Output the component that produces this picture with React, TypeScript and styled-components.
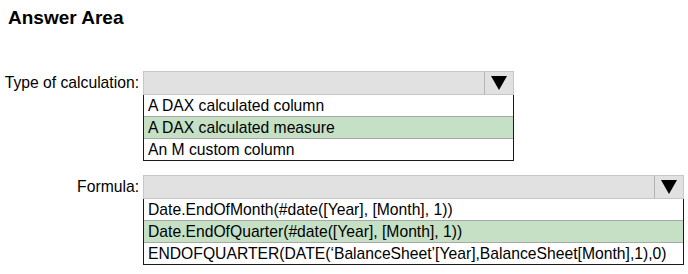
import React from 'react';
import styled, { createGlobalStyle } from 'styled-components';

const Global = createGlobalStyle`
    body {
        margin: 0;
        background: #ffffff;
        font-family: "Liberation Sans", Arial, sans-serif;
        color: #000000;
    }
`;

const S = {
    Page: styled.div`
        width: 688px;
        height: 274px;
        padding: 7px 0 0 7px;
        box-sizing: border-box;
    `,
    Title: styled.h2`
        margin: 0 0 0 1px;
        font-size: 19px;
        line-height: 22px;
        font-weight: bold;
    `,
    Grid: styled.div`
        display: grid;
        grid-template-columns: 136px auto;
        row-gap: 14px;
        margin-top: 42px;
        align-items: start;
    `,
    Label: styled.div`
        height: 24px;
        display: flex;
        align-items: center;
        justify-content: flex-end;
        font-size: 15.7px;
        padding-right: 4px;
        white-space: nowrap;
    `,
    Field: styled.div<{ $width: number }>`
        width: ${(p) => p.$width}px;
        display: flex;
        flex-direction: column;
    `,
    Select: styled.div`
        height: 24px;
        box-sizing: border-box;
        border: 1px solid #c6c6c6;
        background: #e1e1e1;
        display: flex;
        justify-content: flex-end;
    `,
    Arrow: styled.div`
        width: 28px;
        border-left: 1px solid #b4b4b4;
        display: flex;
        align-items: center;
        justify-content: center;
    `,
    List: styled.div`
        border: 1px solid #1a1a1a;
        border-top: none;
        background: #ffffff;
    `,
    Option: styled.div<{ $selected?: boolean }>`
        height: 21px;
        line-height: 21px;
        padding-left: 4px;
        font-size: 15.7px;
        white-space: nowrap;
        background: ${(p) => (p.$selected ? '#c5e0c4' : '#ffffff')};
        border-bottom: 1px solid #a8a8a8;

        &:last-child {
            border-bottom: none;
        }
    `,
};

const Triangle = () => (
    <svg width="16" height="14" viewBox="0 0 16 14">
        <polygon points="0,0 16,0 8,14" fill="#000" />
    </svg>
);

const questions = [
    {
        id: 0,
        label: 'Type of calculation:',
        width: 371,
        options: ['A DAX calculated column', 'A DAX calculated measure', 'An M custom column'],
        selected: 1,
    },
    {
        id: 1,
        label: 'Formula:',
        width: 541,
        options: [
            'Date.EndOfMonth(#date([Year], [Month], 1))',
            'Date.EndOfQuarter(#date([Year], [Month], 1))',
            'ENDOFQUARTER(DATE(\u2018BalanceSheet\u2019[Year],BalanceSheet[Month],1),0)',
        ],
        selected: 1,
    },
];

const App = () => (
    <S.Page>
        <Global />
        <S.Title>Answer Area</S.Title>
        <S.Grid>
            {questions.map((q) => (
                <React.Fragment key={q.id}>
                    <S.Label>{q.label}</S.Label>
                    <S.Field $width={q.width}>
                        <S.Select>
                            <S.Arrow>
                                <Triangle />
                            </S.Arrow>
                        </S.Select>
                        <S.List>
                            {q.options.map((o, i) => (
                                <S.Option key={o} $selected={i === q.selected}>
                                    {o}
                                </S.Option>
                            ))}
                        </S.List>
                    </S.Field>
                </React.Fragment>
            ))}
        </S.Grid>
    </S.Page>
);

export default App;
